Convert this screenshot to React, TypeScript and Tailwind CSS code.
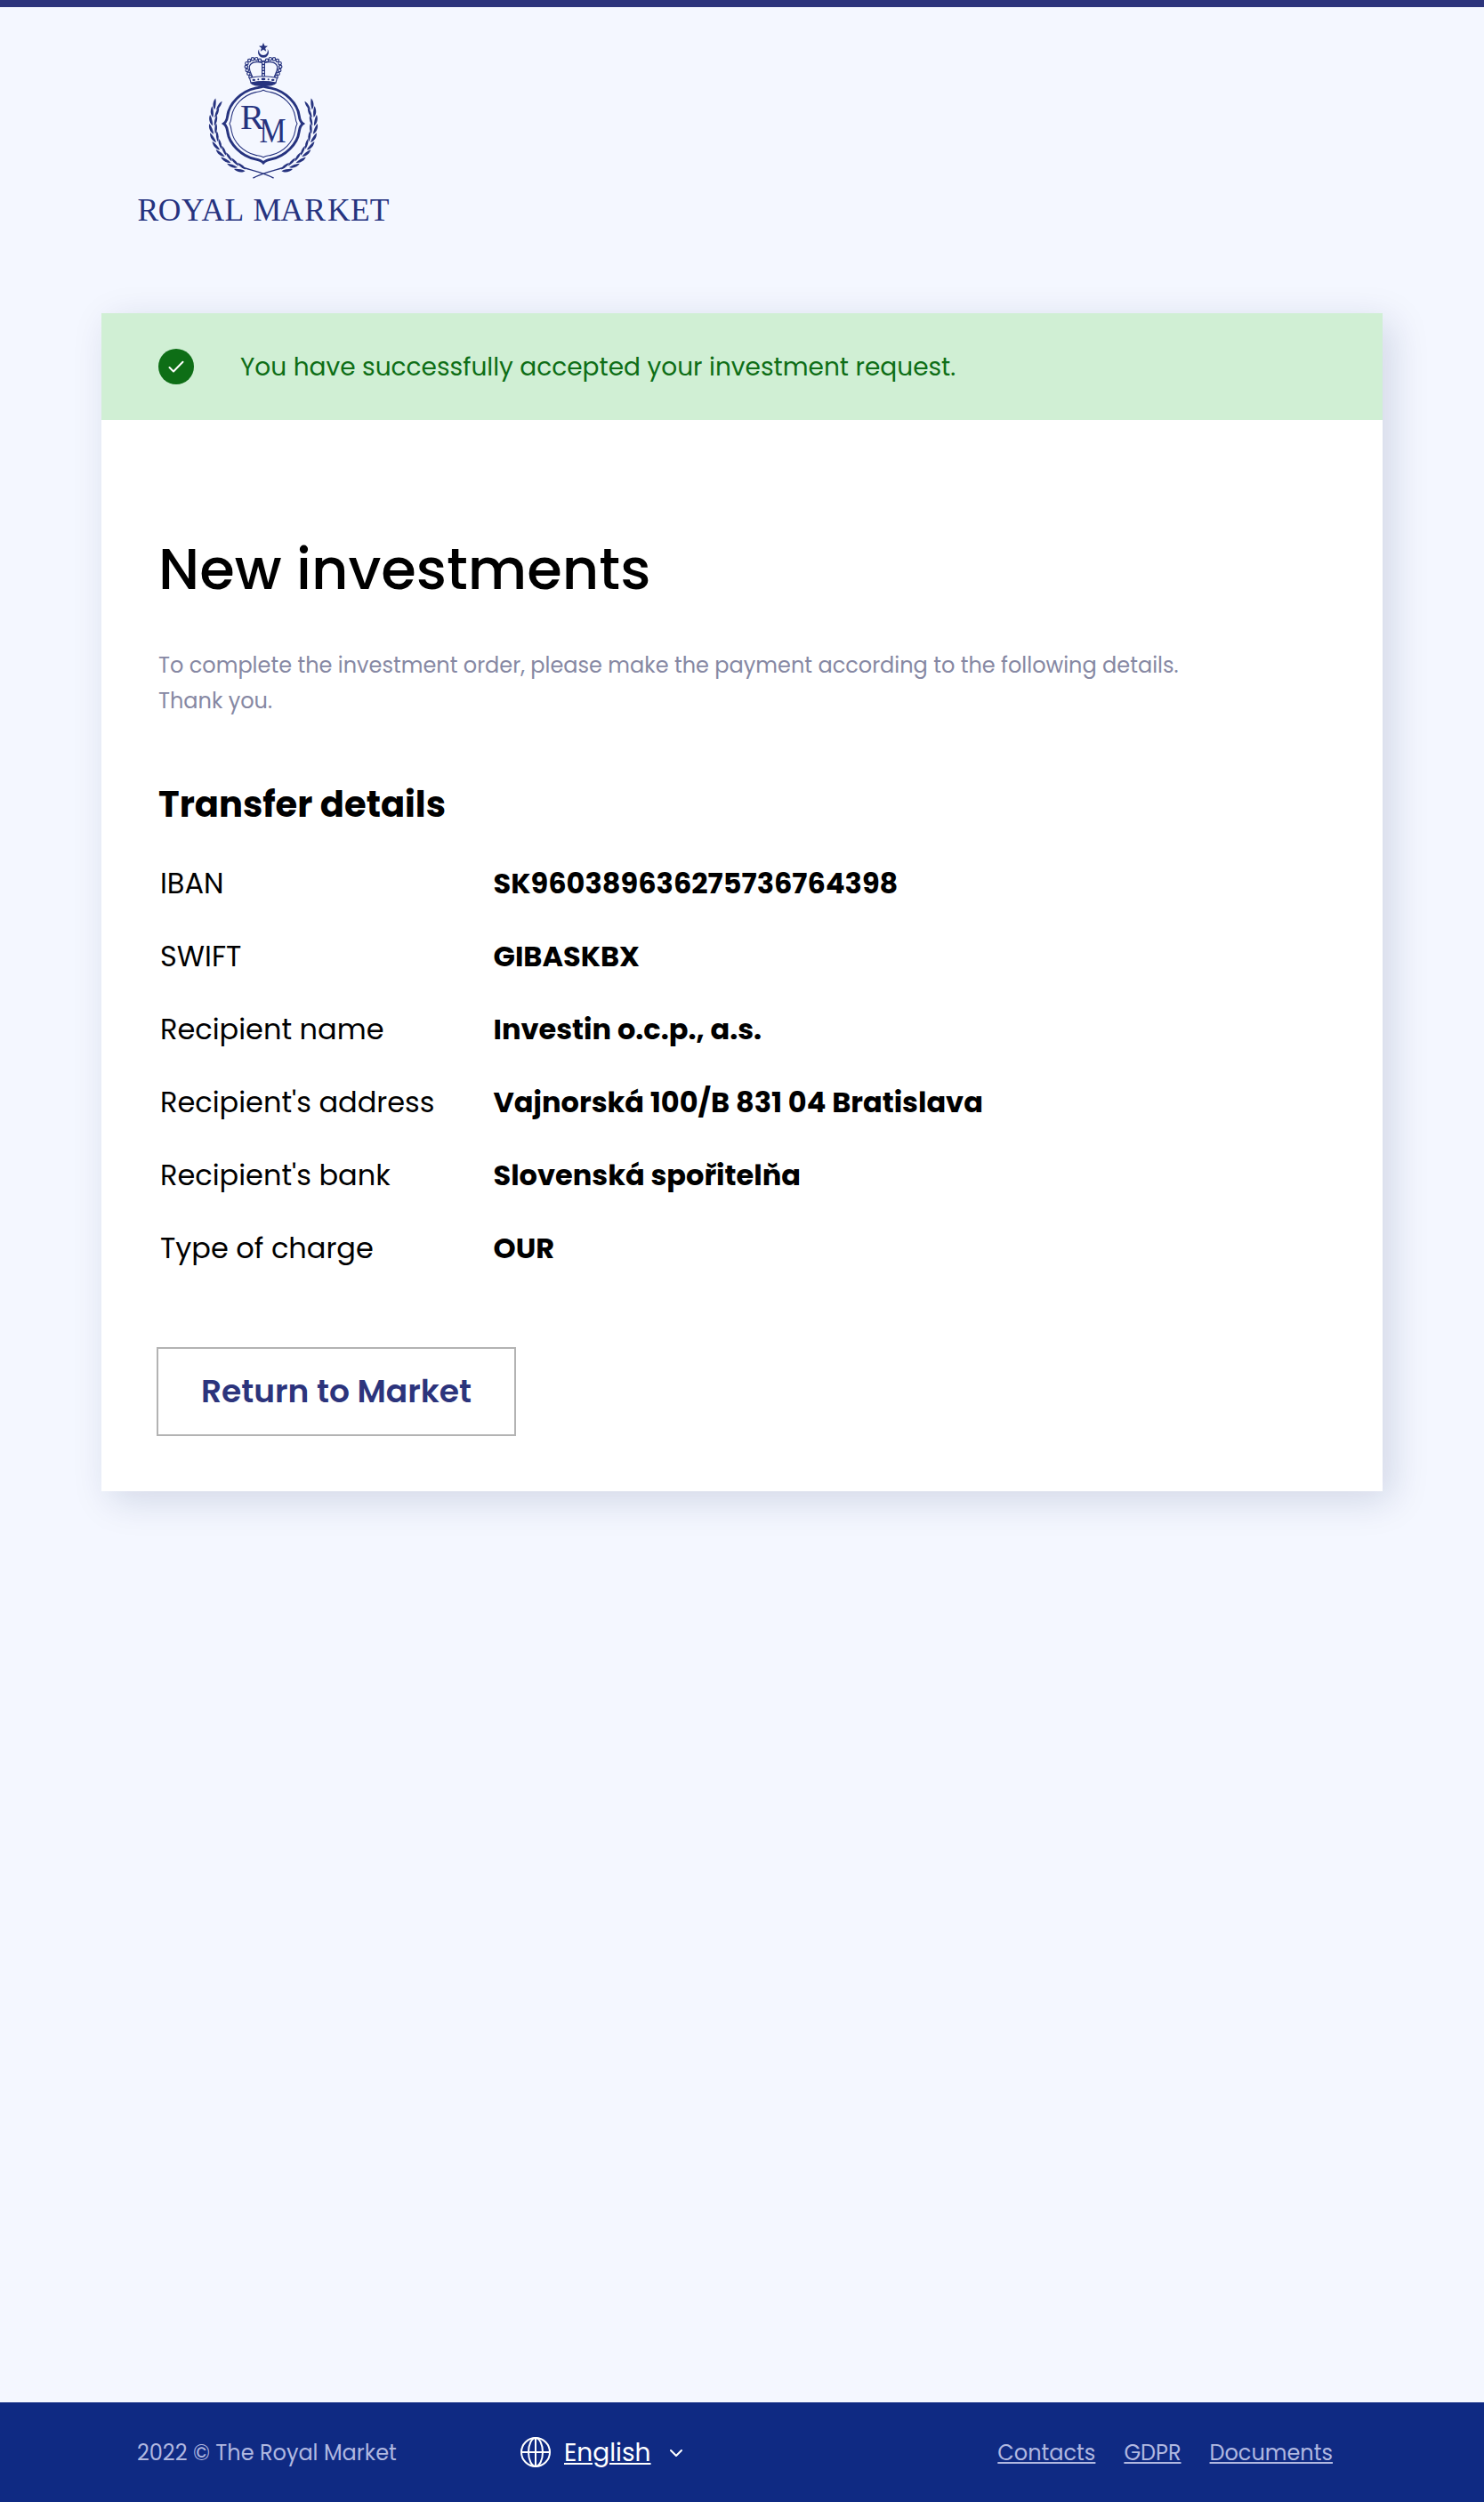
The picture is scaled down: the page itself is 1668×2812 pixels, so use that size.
const details: { label: string; value: string }[] = [
  { label: "IBAN", value: "SK960389636275736764398" },
  { label: "SWIFT", value: "GIBASKBX" },
  { label: "Recipient name", value: "Investin o.c.p., a.s." },
  { label: "Recipient's address", value: "Vajnorská 100/B 831 04 Bratislava" },
  { label: "Recipient's bank", value: "Slovenská spořitelňa" },
  { label: "Type of charge", value: "OUR" },
];

const links = ["Contacts", "GDPR", "Documents"];

const crownBeads: [number, number][] = [
  [292, 67.8], [288.2, 66.2], [284, 66.4], [280.2, 68.0], [277.4, 71.2], [276.8, 75],
  [277.8, 79], [279.4, 82.8], [281.4, 86.4],
];

const leafAngles = [111, 120.5, 130, 139.5, 149, 158.5, 168, 177.5, 187, 196];

function LaurelBranch() {
  return (
    <g>
      {leafAngles.map((angle) => {
        const rad = (angle * Math.PI) / 180;
        const x = 296 + 56 * Math.cos(rad);
        const y = 139 + 56 * Math.sin(rad);
        return (
          <g key={angle} transform={`translate(${x.toFixed(2)} ${y.toFixed(2)}) rotate(${angle + 90})`}>
            <path d="M0 -1 C2.500 -4.600 8.500 -5.600 12.500 -3.400 C9 -1.600 4 -0.600 0 -1Z" />
            <path d="M0 0.800 C4 0.600 9 1.600 11.500 4.400 C7 5 2.500 3.600 0 0.800Z" />
          </g>
        );
      })}
      <path
        d="M272 188 C282 191.200 297 194.200 307.600 200.200"
        fill="none"
        stroke="#26337f"
        strokeWidth="1.500"
      />
    </g>
  );
}

function CrownHalf() {
  return (
    <g fill="#f4f7ff" stroke="#26337f" strokeWidth="1.200">
      <path d="M294 70.500 C288 68.500 281.500 70 280.200 75 C280 79.500 282.500 83 284 87" fill="none" />
      {crownBeads.map(([cx, cy]) => (
        <circle key={`${cx}-${cy}`} cx={cx} cy={cy} r="1.700" />
      ))}
    </g>
  );
}

function Logo() {
  return (
    <svg
      width="312"
      height="218"
      viewBox="140 44 312 218"
      fill="#26337f"
      role="img"
      aria-label="Royal Market"
      className="block"
    >
      <path d="M296 48 L297.400 51.600 L301 51.800 L298.200 54.100 L299.200 57.800 L296 55.700 L292.800 57.800 L293.800 54.100 L291 51.800 L294.600 51.600Z" />
      <path d="M291.400 55 A6 6 0 1 0 300.600 55 A5 5 0 1 1 291.400 55Z" />
      <CrownHalf />
      <g transform="translate(592 0) scale(-1 1)">
        <CrownHalf />
      </g>
      <path d="M294 68 H298 V87 H294Z" />
      {[70.8, 74.2, 77.6, 81, 84.4].map((y) => (
        <rect key={y} x="295.100" y={y - 1} width="1.800" height="1.900" fill="#f4f7ff" />
      ))}
      <path d="M280.500 87.500 C290 85.400 302 85.400 311.500 87.500 L310 93 C301 91.200 291 91.200 282 93Z" fill="#f4f7ff" stroke="#26337f" strokeWidth="1.100" />
      <ellipse cx="296" cy="88.900" rx="2.400" ry="1.300" />
      <ellipse cx="285.300" cy="89.900" rx="1.800" ry="1.100" />
      <ellipse cx="306.700" cy="89.900" rx="1.800" ry="1.100" />
      <circle cx="290.300" cy="89.200" r="1" />
      <circle cx="301.700" cy="89.200" r="1" />
      <path d="M281.500 93 C290 90.900 302 90.900 310.500 93 C309.500 96 303 97 296 97 C289 97 282.500 96 281.500 93Z" />

      <path
        d="M296 97.200 C293 98.400 290 98.500 287 99.100 C271 102.500 257.500 116.500 255.800 130 C255.300 134 254.500 137 251.500 139 C254.500 141 255.300 144 255.800 148 C257.500 161.500 271 175.500 287 178.900 C290 179.500 293.500 180.200 296 183 C298.500 180.200 302 179.500 305 178.900 C321 175.500 334.500 161.500 336.200 148 C336.700 144 337.500 141 340.500 139 C337.500 137 336.700 134 336.200 130 C334.500 116.500 321 102.500 305 99.100 C302 98.500 299 98.400 296 97.200Z"
        fill="none"
        stroke="#26337f"
        strokeWidth="2.900"
      />
      <path
        d="M296 101.200 C293 103 290.500 103 287.500 103.600 C273.500 107 262.500 118 260.200 131 C259.800 134.500 259.600 136.500 258 139 C259.600 141.500 259.800 143.500 260.200 147 C262.500 160 273.500 171 287.500 174.400 C290.500 175 293 175 296 176.800 C299 175 301.500 175 304.500 174.400 C318.500 171 329.500 160 331.800 147 C332.200 143.500 332.400 141.500 334 139 C332.400 136.500 332.200 134.500 331.800 131 C329.500 118 318.500 107 304.500 103.600 C301.500 103 299 103 296 101.200Z"
        fill="none"
        stroke="#26337f"
        strokeWidth="1.100"
      />

      <LaurelBranch />
      <g transform="translate(592 0) scale(-1 1)">
        <LaurelBranch />
      </g>

      <g fontFamily="'Liberation Serif', serif">
        <text x="270" y="144.500" fontSize="40" textLength="27" lengthAdjust="spacingAndGlyphs">R</text>
        <text x="291.500" y="160" fontSize="40.500" textLength="30" lengthAdjust="spacingAndGlyphs">M</text>
        <text x="154.500 177.800 204 226.500 252.500" y="247.500" fontSize="35.500">ROYAL</text>
        <text x="284.500 315.200 342.300 368 394 415.800" y="247.500" fontSize="35.500">MARKET</text>
      </g>
    </svg>
  );
}

function CheckBadge() {
  return (
    <span className="flex size-10 shrink-0 items-center justify-center rounded-full bg-[#0e6e16]">
      <svg width="20" height="16" viewBox="0 0 20 16" fill="none" stroke="#fff" strokeWidth="2" strokeLinecap="round" strokeLinejoin="round">
        <path d="M2.500 9 L7 13.500 L17.500 2.800" />
      </svg>
    </span>
  );
}

function GlobeIcon() {
  return (
    <svg width="36" height="36" viewBox="0 0 36 36" fill="none" stroke="#fff" strokeWidth="2" className="block">
      <circle cx="18" cy="18" r="16" />
      <ellipse cx="18" cy="18" rx="8" ry="16" />
      <path d="M18 2V34M2 18H34" />
    </svg>
  );
}

export default function App() {
  return (
    <div className="flex h-[2812px] w-[1668px] flex-col border-t-8 border-[#2c347c] bg-[#f4f7ff] font-['Poppins','Inter',sans-serif] text-black">
      <header className="h-[344px] pt-9 pl-[140px]">
        <Logo />
      </header>

      <main className="ml-[114px] flex h-[1324px] w-[1440px] flex-col items-start bg-white shadow-[10px_10px_40px_rgba(11,34,88,0.15)]">
        <div className="flex h-[120px] w-full items-center gap-[52px] bg-[#d0efd4] pl-16 text-[28px] text-[#0e6e16]">
          <CheckBadge />
          <p className="pt-0.5">You have successfully accepted your investment request.</p>
        </div>

        <div className="px-16 pt-[120px]">
          <h1 className="text-[64px] leading-[96px] font-medium">New investments</h1>
          <p className="mt-10 text-2xl leading-10 text-[#8688a3]">
            To complete the investment order, please make the payment according to the following details.
            <br />
            Thank you.
          </p>
          <h2 className="mt-[66px] text-[40px] leading-[60px] font-bold">Transfer details</h2>
          <dl className="mt-[18px] ml-0.5 text-[32px]">
            {details.map(({ label, value }) => (
              <div key={label} className="flex h-[82px] items-center">
                <dt className="w-[374.5px]">{label}</dt>
                <dd className="font-bold">{value}</dd>
              </div>
            ))}
          </dl>
        </div>

        <button className="mt-[70px] ml-[62px] flex h-[100px] w-[404px] items-center justify-center border-2 border-[#b3b3b3] text-4xl font-semibold text-[#2c347c]">
          Return to Market
        </button>
      </main>

      <footer className="mt-auto flex h-28 w-full items-center bg-[#0f2a83] pr-[170px] pl-[154px] text-2xl text-[#b0b8e0]">
        <p className="w-[430px] pt-0.5">2022 © The Royal Market</p>
        <div className="flex items-center text-[28px] text-white">
          <GlobeIcon />
          <span className="ml-3.5 pt-0.5 underline decoration-2 underline-offset-2">English</span>
          <svg width="16" height="10" viewBox="0 0 16 10" fill="none" stroke="#fff" strokeWidth="2" strokeLinecap="round" strokeLinejoin="round" className="mt-0.5 ml-5">
            <path d="M2 2 L8 8 L14 2" />
          </svg>
        </div>
        <nav className="ml-auto flex gap-8 pt-0.5">
          {links.map((link) => (
            <a key={link} href="#" className="underline decoration-2 underline-offset-2">
              {link}
            </a>
          ))}
        </nav>
      </footer>
    </div>
  );
}
